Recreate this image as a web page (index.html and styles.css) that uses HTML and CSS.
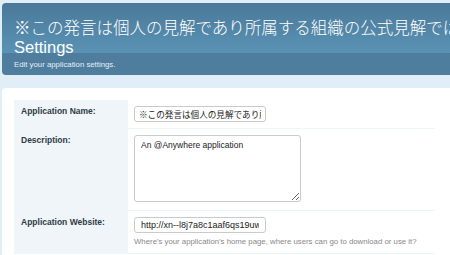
FILE: index.html
```html
<!DOCTYPE html>
<html lang="ja">
<head>
<meta charset="utf-8">
<title>Settings</title>
<link rel="stylesheet" href="styles.css">
</head>
<body>
<div class="page">
  <header class="hero">
    <h1 class="hero-title"><span class="hero-app">※この発言は個人の見解であり所属する組織の公式見解ではありません</span><span class="hero-word">Settings</span></h1>
    <p class="hero-desc">Edit your application settings.</p>
  </header>
  <main class="panel">
    <div class="form">
      <div class="form-label">Application Name:</div>
      <div class="form-field">
        <input class="text-input" type="text" value="※この発言は個人の見解であり所属する組織の公式見解ではありません">
      </div>
      <div class="form-label">Description:</div>
      <div class="form-field">
        <textarea class="text-area">An @Anywhere application</textarea>
      </div>
      <div class="form-label">Application Website:</div>
      <div class="form-field">
        <input class="text-input text-input-url" type="text" value="http://xn--l8j7a8c1aaf6qs19uw.example.jp/">
        <p class="help">Where's your application's home page, where users can go to download or use it?</p>
      </div>
    </div>
  </main>
</div>
</body>
</html>
```
FILE: styles.css
```css
html, body {
  overflow: hidden;
}
body {
  margin: 3px 0 0 2px;
  background: #e0eff7;
  font-family: "Liberation Sans", "Noto Sans CJK JP", sans-serif;
  color: #333;
}
.page {
  width: 490px;
}
.hero {
  border-radius: 4px;
  height: 72px;
  box-sizing: border-box;
  padding: 16px 12px 0;
  background: linear-gradient(to bottom, #4a7898 0, #5a93b5 50px, #4e7d9e 50px, #4e7d9e 100%);
  color: #fff;
  margin-bottom: 13px;
}
.hero-title {
  margin: 0;
  font-size: 16.5px;
  font-weight: normal;
  line-height: 19px;
}
.hero-app,
.hero-word {
  display: block;
  white-space: nowrap;
  height: 19px;
}
.hero-app {
  font-weight: 300;
}
.hero-desc {
  margin: 3px 0 0;
  font-size: 7.8px;
  line-height: 10px;
  color: #e6eff5;
}
.panel {
  background: #fff;
  border-radius: 4px;
  padding: 12px 12px 20px;
}
.form {
  display: grid;
  grid-template-columns: 114px 307px;
}
.form-label {
  background: #eff5f9;
  padding: 6px 7px;
  font-size: 8.5px;
  line-height: 11px;
  font-weight: bold;
  color: #2e3b44;
}
.form-field {
  padding: 6px 6px 6px;
  border-bottom: 1px solid #eef4f8;
}
.text-input {
  display: block;
  box-sizing: border-box;
  width: 132px;
  height: 16px;
  margin: 0;
  padding: 0 4px;
  border: 1px solid #cacaca;
  border-radius: 3px;
  background: #fff;
  font-family: "Liberation Sans", "Noto Sans CJK JP", sans-serif;
  font-size: 8.6px;
  color: #222;
  outline: none;
}
.text-input-url {
  padding: 0 6px;
  font-size: 9px;
}
.text-area {
  display: block;
  box-sizing: border-box;
  width: 167px;
  height: 67px;
  margin: 0 0 2px;
  padding: 4px 6px;
  border: 1px solid #cacaca;
  border-radius: 3px;
  font-family: "Liberation Sans", "Noto Sans CJK JP", sans-serif;
  font-size: 8.5px;
  line-height: 11px;
  color: #222;
  outline: none;
}
.help {
  margin: 4px 0 0;
  font-size: 7.8px;
  line-height: 10px;
  color: #888;
}
```
